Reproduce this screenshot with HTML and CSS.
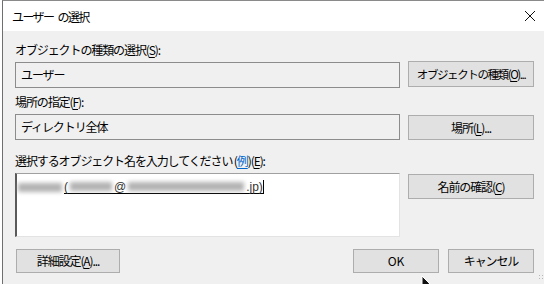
FILE: index.html
```html
<!DOCTYPE html>
<html lang="ja">
	<head>
		<meta charset="utf-8">
		<title>ユーザー の選択</title>
		<link rel="stylesheet" href="styles.css">
	</head>
	<body>
		<div class="dialog">
			<div class="titlebar">
				<span class="title">ユーザー の選択</span>
				<svg class="close" width="12" height="12" viewBox="0 0 12 12">
					<path d="M1 1L11 11M11 1L1 11" stroke="#111" stroke-width="1" fill="none"/>
				</svg>
			</div>
			<div class="content">
				<div class="label">オブジェクトの種類の選択(<u>S</u>):</div>
				<div class="row">
					<div class="field">ユーザー</div>
					<div class="btn btn-type">オブジェクトの種類(<u>O</u>)...</div>
				</div>

				<div class="label label-2">場所の指定(<u>F</u>):</div>
				<div class="row row-2">
					<div class="field">ディレクトリ全体</div>
					<div class="btn">場所(<u>L</u>)...</div>
				</div>

				<div class="label label-3">選択するオブジェクト名を入力してください (<span class="link">例</span>)(<u>E</u>):</div>
				<div class="row row-3">
					<div class="names">
						<div class="line">
							<span class="blur w44"></span>
							<span class="picked">(<span class="blur w42"></span>@<span class="blur w116"></span>.jp)</span><span class="caret"></span>
						</div>
					</div>
					<div class="btn btn-check">名前の確認(<u>C</u>)</div>
				</div>

				<div class="footer">
					<div class="btn btn-adv">詳細設定(<u>A</u>)...</div>
					<div class="spacer"></div>
					<div class="btn btn-ok">OK</div>
					<div class="btn btn-cancel">キャンセル</div>
				</div>
			</div>
			<svg class="pointer" width="10" height="10" viewBox="0 0 10 10">
				<path d="M1 0L1 10L9 8Z" fill="#111" stroke="#fff" stroke-width="1"/>
			</svg>
			<div class="grip"></div>
		</div>
	</body>
</html>
```

FILE: styles.css
```css
* {
  margin: 0;
  padding: 0;
  box-sizing: border-box;
}

html, body {
  width: 544px;
  height: 284px;
  overflow: hidden;
  background: #fff;
}

body {
  font-family: "Noto Sans CJK JP", "Noto Sans", sans-serif;
  font-size: 12px;
  color: #000;
}

u {
  text-decoration: underline;
  text-underline-offset: 2px;
}

.dialog {
  position: relative;
  margin-left: 2px;
  height: 284px;
  border-left: 1px solid #6f6f6f;
  border-top: 1px solid #8a8a8a;
  background: #f0f0f0;
}

.titlebar {
  height: 30px;
  background: #fff;
  display: flex;
  align-items: center;
  padding-left: 9px;
  padding-right: 8px;
}

.title {
  flex: 1;
  letter-spacing: -1.6px;
  word-spacing: 3px;
}

.close {
  display: block;
}

.content {
  padding: 9px 0 0 12px;
  width: 531px;
}

.label {
  height: 20px;
  line-height: 20px;
  letter-spacing: -1.1px;
  white-space: nowrap;
}

.label-2 {
  margin-top: 4px;
}

.label-3 {
  margin-top: 11px;
}

.link {
  color: #0066cc;
  text-decoration: underline;
  text-underline-offset: 2px;
}

.row {
  display: flex;
  gap: 8px;
  align-items: flex-start;
  margin-top: 1px;
}

.row-2 {
  margin-top: 1px;
}

.row-3 {
  margin-top: 2px;
}

.field {
  width: 385px;
  height: 26px;
  margin-top: 1px;
  border: 1px solid #8c8c8c;
  padding-left: 5px;
  line-height: 24px;
  letter-spacing: -1.1px;
}

.btn {
  width: 126px;
  height: 26px;
  border: 1px solid #adadad;
  background: #e1e1e1;
  text-align: center;
  line-height: 24px;
  letter-spacing: -1.1px;
  white-space: nowrap;
}

.btn-type {
  font-size: 11.5px;
  letter-spacing: -1.4px;
}

.row-2 .btn {
  height: 25px;
  margin-top: 2px;
}

.btn-check {
  height: 25px;
  margin-top: 1px;
}

.names {
  width: 385px;
  height: 64px;
  background: #fff;
  border-top: 1px solid #a0a0a0;
  border-left: 2px solid #5a5a5a;
  border-right: 1px solid #e3e3e3;
  border-bottom: 1px solid #e3e3e3;
  padding: 6px 0 0 1px;
}

.line {
  display: flex;
  align-items: center;
  height: 14px;
  color: #333;
  font-family: "Liberation Sans", sans-serif;
}

.picked {
  display: flex;
  align-items: center;
  margin-left: 2px;
  height: 14px;
  border-bottom: 1px solid #000;
  gap: 2px;
}

.blur {
  display: inline-block;
  height: 9px;
  background: #9a9a9a;
  filter: blur(2px);
  opacity: 0.75;
}

.w44 { width: 44px; }
.w42 { width: 42px; }
.w116 { width: 116px; }

.caret {
  width: 1px;
  height: 14px;
  background: #000;
}

.footer {
  display: flex;
  gap: 9px;
  margin-top: 12px;
  width: 519px;
}

.footer .btn {
  height: 24px;
  line-height: 22px;
}

.btn-ok {
  letter-spacing: 0;
}

.btn-adv {
  width: 104px;
  margin-left: 1px;
}

.spacer {
  flex: 1;
}

.btn-ok,
.btn-cancel {
  width: 86px;
}

.pointer {
  position: absolute;
  left: 418px;
  top: 275px;
}

.grip {
  position: absolute;
  left: 535px;
  top: 273px;
  width: 7px;
  height: 7px;
  background-image: radial-gradient(circle, #b8b8b8 0.8px, transparent 1px);
  background-size: 3px 3px;
}
```
